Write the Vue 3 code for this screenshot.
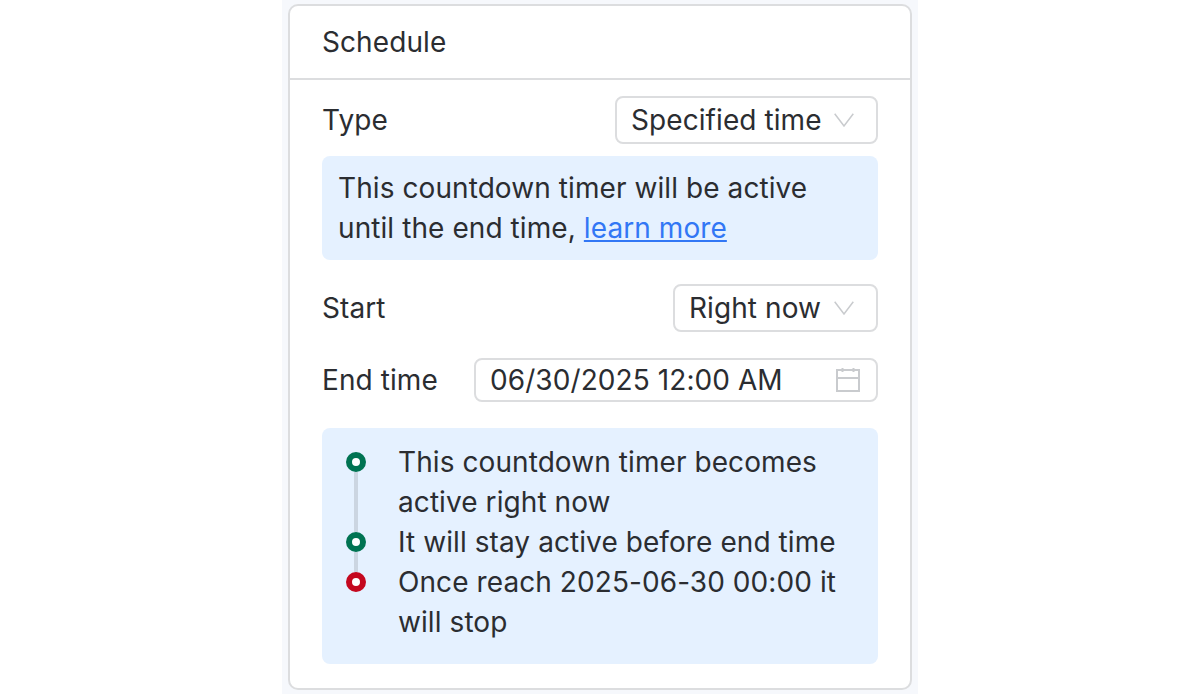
<script setup>
const steps = [
  { text: 'This countdown timer becomes active right now', color: 'green' },
  { text: 'It will stay active before end time', color: 'green' },
  { text: 'Once reach 2025-06-30 00:00 it will stop', color: 'red' },
];
</script>

<template>
  <div class="page">
    <div class="column">
      <section class="card">
        <header class="card-header">Schedule</header>
        <div class="card-body">
          <div class="row">
            <span>Type</span>
            <div class="select select-type">
              <span>Specified time</span>
              <svg class="chevron" viewBox="0 0 20 14" fill="none">
                <path d="M.7.7 10 13 19.3.7" stroke="#c9cbce" stroke-width="1.5" />
              </svg>
            </div>
          </div>
          <div class="notice">
            This countdown timer will be active until the end time,
            <a class="link" href="#">learn more</a>
          </div>
          <div class="row row-start">
            <span>Start</span>
            <div class="select select-start">
              <span>Right now</span>
              <svg class="chevron" viewBox="0 0 20 14" fill="none">
                <path d="M.7.7 10 13 19.3.7" stroke="#c9cbce" stroke-width="1.5" />
              </svg>
            </div>
          </div>
          <div class="row row-end">
            <span>End time</span>
            <div class="date-input">
              <span>06/30/2025 12:00 AM</span>
              <svg class="calendar" viewBox="0 0 24 24" fill="none" stroke="#c9cbce" stroke-width="2">
                <rect x="1" y="2" width="22" height="21" />
                <path d="M1 10H23M6.5 0V4M17.5 0V4" />
              </svg>
            </div>
          </div>
          <div class="timeline">
            <div
              v-for="(step, i) in steps"
              :key="i"
              class="step"
            >
              <div class="rail">
                <i class="line line-top" :class="{ hidden: i === 0 }"></i>
                <i class="dot" :class="step.color"></i>
                <i class="line line-bottom" :class="{ hidden: i === steps.length - 1 }"></i>
              </div>
              <div class="step-text">{{ step.text }}</div>
            </div>
          </div>
        </div>
      </section>
    </div>
  </div>
</template>

<style>
html,
body {
  margin: 0;
  background: #fff;
}
</style>

<style scoped>
.page {
  display: flex;
  justify-content: center;
  height: 694px;
  overflow: hidden;
  font-family: Inter, "Liberation Sans", sans-serif;
  font-size: 28px;
  letter-spacing: 0.08px;
  line-height: 40px;
  color: #2b2d31;
}

.column {
  box-sizing: border-box;
  width: 636px;
  height: 694px;
  padding: 4px 6px;
  background: #f6f8fc;
}

.card {
  box-sizing: border-box;
  height: 686px;
  background: #fff;
  border: 2px solid #dcdddf;
  border-radius: 10px;
}

.card-header {
  height: 72px;
  padding: 0 32px;
  line-height: 72px;
  border-bottom: 2px solid #dcdddf;
}

.card-body {
  padding: 16px 32px 24px;
}

.row {
  display: flex;
  align-items: center;
  justify-content: space-between;
}

.row-start {
  margin-top: 24px;
}

.row-end {
  margin-top: 26px;
}

.select {
  display: flex;
  align-items: center;
  justify-content: space-between;
  box-sizing: border-box;
  height: 48px;
  padding: 0 22px 0 14px;
  border: 2px solid #dcdddf;
  border-radius: 8px;
  background: #fff;
}

.select-type {
  width: 263px;
}

.select-start {
  width: 205px;
}

.chevron {
  width: 20px;
  height: 14px;
}

.notice {
  margin-top: 12px;
  padding: 12px 16px;
  background: #e5f1ff;
  border-radius: 8px;
}

.link {
  color: #3277f5;
  text-decoration: underline;
}

.date-input {
  display: flex;
  align-items: center;
  justify-content: space-between;
  box-sizing: border-box;
  width: 404px;
  height: 44px;
  padding: 0 16px 0 14px;
  border: 2px solid #dcdddf;
  border-radius: 8px;
}

.calendar {
  width: 24px;
  height: 24px;
}

.timeline {
  margin-top: 26px;
  padding: 14px 24px 22px;
  background: #e5f1ff;
  border-radius: 8px;
}

.step {
  display: flex;
  gap: 32px;
}

.rail {
  display: flex;
  flex-direction: column;
  align-items: center;
  flex: none;
  width: 20px;
}

.line {
  display: block;
  width: 4px;
  background: #cbd5e1;
}

.line-top {
  height: 10px;
}

.line-bottom {
  flex: 1;
}

.hidden {
  visibility: hidden;
}

.dot {
  display: block;
  flex: none;
  box-sizing: border-box;
  width: 20px;
  height: 20px;
  border: 6px solid;
  border-radius: 50%;
  background: #fff;
}

.dot.green {
  border-color: #007352;
}

.dot.red {
  border-color: #c4081f;
}

.step-text {
  flex: 1;
}
</style>
